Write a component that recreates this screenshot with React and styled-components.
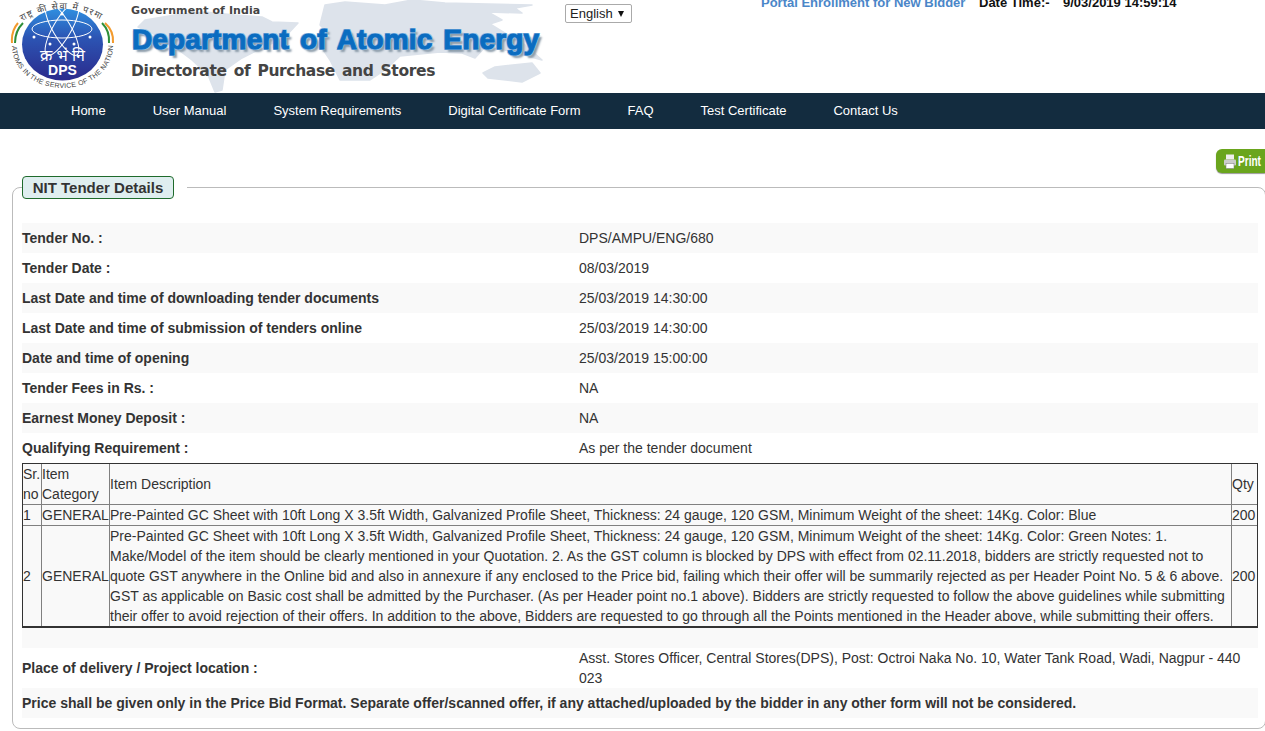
import React from 'react'
import styled, { createGlobalStyle } from 'styled-components'

const GlobalStyle = createGlobalStyle`
  html, body {
    margin: 0;
    padding: 0;
    background: #fff;
    font-family: "Liberation Sans", Arial, sans-serif;
    font-size: 14px;
    color: #333;
    overflow: hidden;
  }
`

const Page = styled.div`
  width: 1265px;
  height: 731px;
  overflow: hidden;
`

const Header = styled.header`
  display: flex;
  height: 93px;
  overflow: hidden;
`

const LogoBox = styled.div`
  width: 131px;
  flex: none;
  padding: 0 0 0 10px;
  box-sizing: border-box;
`

const Banner = styled.div`
  position: relative;
  width: 434px;
  flex: none;
  display: flex;
  flex-direction: column;
  font-family: "DejaVu Sans", sans-serif;
  font-weight: 700;
`

const MapArt = styled.svg`
  position: absolute;
  left: -10px;
  top: 0;
  z-index: 0;
`

const BannerLine = styled.div`
  position: relative;
  z-index: 1;
  white-space: nowrap;
  color: ${(props) => props.color || '#444'};
  font-size: ${(props) => props.size}px;
  line-height: ${(props) => props.height}px;
  letter-spacing: ${(props) => props.spacing || 0}px;
  word-spacing: ${(props) => props.words || 0}px;
`

const DeptLine = styled(BannerLine)`
  padding-left: 1px;
  font-family: "Liberation Sans", Arial, sans-serif;
  -webkit-text-stroke: 1px #0a6cc0;
  text-shadow: 1px 1px 0 #8fbde6, -1px -1px 0 #8fbde6, 1px -1px 0 #8fbde6, -1px 1px 0 #8fbde6, 3px 3px 2px #8a9aa8;
`

const LangBox = styled.div`
  position: relative;
  width: 196px;
  flex: none;
  padding-top: 4px;
`

const LangSelect = styled.select`
  appearance: none;
  display: block;
  box-sizing: border-box;
  width: 67px;
  height: 19px;
  font-family: "Liberation Sans", Arial, sans-serif;
  font-size: 13px;
  color: #222;
  background: #fff;
  border: 1px solid #aaa;
  border-radius: 2px;
  padding: 0 0 0 4px;
`

const LangArrow = styled.span`
  position: absolute;
  left: 53px;
  top: 11px;
  width: 0;
  height: 0;
  border-left: 3.5px solid transparent;
  border-right: 3.5px solid transparent;
  border-top: 6px solid #111;
  pointer-events: none;
`

const TopInfo = styled.div`
  display: flex;
  margin-top: -5px;
  font-size: 13px;
  line-height: 15px;
  font-weight: 700;
  white-space: nowrap;
  color: #111;
`

const EnrollLink = styled.a`
  color: #4a86c8;
  width: 218px;
`

const DateLabel = styled.span`
  width: 84px;
`

const NavBar = styled.nav`
  display: flex;
  gap: 47px;
  height: 36px;
  box-sizing: border-box;
  align-items: center;
  padding: 0 0 1px 71px;
  background: #132c3f;
`

const NavItem = styled.a`
  color: #fff;
  font-size: 13px;
`

const PrintRow = styled.div`
  display: flex;
  justify-content: flex-end;
  padding-top: 20px;
`

const PrintButton = styled.button`
  display: flex;
  align-items: center;
  gap: 1px;
  width: 49px;
  height: 24px;
  padding: 0 0 0 7px;
  border: 0;
  border-radius: 6px 0 0 6px;
  background: #6aa51d;
  box-shadow: 0 1px 1px #999;
  color: #fff;
  font-family: "Liberation Sans", sans-serif;
  font-size: 14px;
  font-weight: 700;
`

const PrintIcon = styled.svg`
  flex: none;
`

const PrintLabel = styled.span`
  display: block;
  flex: none;
  transform: scaleX(0.72);
  transform-origin: left center;
`

const Panel = styled.fieldset`
  box-sizing: border-box;
  margin: 3px 0 0 12px;
  width: 1254px;
  height: 553px;
  padding: 24px 7px 0 9px;
  border: 1px solid #bbb;
  border-radius: 8px;
`

const PanelLegend = styled.legend`
  padding: 0 13px 0 0;
  margin: 0;
`

const PanelTitle = styled.div`
  box-sizing: border-box;
  display: flex;
  align-items: center;
  justify-content: center;
  width: 152px;
  height: 23px;
  font-size: 15px;
  font-weight: 700;
  color: #333;
  background: #dfeeef;
  border: 1px solid #1f6b2c;
  border-radius: 4px;
`

const InfoRow = styled.div`
  display: grid;
  grid-template-columns: 557px 1fr;
  align-items: center;
  min-height: ${(props) => props.height || 30}px;
  background: ${(props) => (props.striped ? '#f9f9f9' : '#fff')};
`

const FieldLabel = styled.div`
  font-weight: 700;
  color: #333;
`

const FieldValue = styled.div`
  line-height: 20px;
  color: #333;
`

const NoteRow = styled.div`
  display: flex;
  align-items: center;
  height: 30px;
  font-weight: 700;
  color: #333;
  background: #f9f9f9;
`

const ItemsTable = styled.table`
  box-sizing: border-box;
  width: 1236px;
  border-collapse: separate;
  border-spacing: 0;
  table-layout: fixed;
  border: 1px solid #333;
  border-bottom-width: 2px;
  background: #f9f9f9;
`

const Cell = styled.td`
  padding: 0;
  line-height: 20px;
  color: #333;
  font-size: 14px;
  overflow: hidden;
  white-space: ${(props) => (props.nowrap ? 'nowrap' : 'normal')};

  & + & {
    border-left: 1px solid #808080;
  }

  tr + tr > & {
    border-top: 1px solid #808080;
  }
`

const Spacer = styled.div`
  height: 20px;
  background: #f9f9f9;
`

const fields = [
  ['Tender No. :', 'DPS/AMPU/ENG/680'],
  ['Tender Date :', '08/03/2019'],
  ['Last Date and time of downloading tender documents', '25/03/2019 14:30:00'],
  ['Last Date and time of submission of tenders online', '25/03/2019 14:30:00'],
  ['Date and time of opening', '25/03/2019 15:00:00'],
  ['Tender Fees in Rs. :', 'NA'],
  ['Earnest Money Deposit :', 'NA'],
  ['Qualifying Requirement :', 'As per the tender document'],
]

const menu = ['Home', 'User Manual', 'System Requirements', 'Digital Certificate Form', 'FAQ', 'Test Certificate', 'Contact Us']

const Logo = () => (
  <svg width="106" height="93" viewBox="0 0 106 93">
    <defs>
      <linearGradient id="disc" x1="0" y1="0" x2="0" y2="1">
        <stop offset="0" stopColor="#2f8fe0" />
        <stop offset="0.4" stopColor="#2c55b4" />
        <stop offset="1" stopColor="#2b2a8c" />
      </linearGradient>
      <path id="topArc" d="M12 21 Q52.5 -3 93 21" />
      <path id="botArc" d="M2 46 A50.5 42 0 0 0 103 46" />
    </defs>
    <ellipse cx="52.5" cy="44.5" rx="40.5" ry="36" fill="url(#disc)" />
    <g fill="none" stroke="#fff" strokeWidth="1">
      <ellipse cx="52" cy="29" rx="30" ry="9" />
      <ellipse cx="52" cy="29" rx="30" ry="9" transform="rotate(60 52 29)" />
      <ellipse cx="52" cy="29" rx="30" ry="9" transform="rotate(120 52 29)" />
    </g>
    <g fill="#fff">
      <circle cx="24" cy="37" r="1.5" />
      <circle cx="80" cy="37" r="1.5" />
      <circle cx="40" cy="44" r="1.5" />
      <circle cx="64" cy="44" r="1.5" />
      <circle cx="52" cy="14" r="1.5" />
    </g>
    <text x="52.5" y="61" textAnchor="middle" fontFamily="'Noto Sans', 'DejaVu Sans', sans-serif" fontSize="16" fill="#fff">क्र भं नि</text>
    <text x="52.5" y="75" textAnchor="middle" fontFamily="'Liberation Sans', sans-serif" fontSize="14" fontWeight="700" fill="#fff">DPS</text>
    <text fontSize="9" fill="#444" fontFamily="'Noto Sans', sans-serif" textLength="90"><textPath href="#topArc">राष्ट्र की सेवा में परमाणु</textPath></text>
    <text fontSize="7" fill="#444" fontFamily="'Liberation Sans', sans-serif" textLength="146"><textPath href="#botArc">ATOMS IN THE SERVICE OF THE NATION</textPath></text>
    <path d="M2 43 Q1 31 8 23" fill="none" stroke="#f39a2d" strokeWidth="2" />
    <path d="M5 43 Q5 31 13 23" fill="none" stroke="#2f8f3a" strokeWidth="2" />
    <path d="M103 43 Q104 31 95 23" fill="none" stroke="#f39a2d" strokeWidth="2" />
    <path d="M99 43 Q100 31 92 23" fill="none" stroke="#2f8f3a" strokeWidth="2" />
  </svg>
)

const App = () => (
  <Page>
    <GlobalStyle />
    <Header>
      <LogoBox><Logo /></LogoBox>
      <Banner>
        <MapArt width="450" height="93" viewBox="121 0 450 93">
          <g fill="#dde3eb" stroke="#dde3eb" strokeWidth="1.5" strokeLinejoin="round">
            <path d="M138 27 L145 20 L175 15 L205 12 L235 15 L262 17 L272 22 L298 23 L285 37 L258 50 L242 58 L225 70 L222 90 L215 92 L208 75 L192 60 L168 42 L152 33 Z" />
            <path d="M325 5 L345 2 L385 5 L412 0 L445 3 L532 5 L515 8 L522 13 L488 12 L502 20 L490 24 L525 45 L542 60 L505 50 L485 47 L475 58 L462 53 L440 52 L400 56 L385 70 L370 80 L340 80 L330 60 L322 48 L330 35 L320 25 Z" />
            <path d="M483 73 L495 67 L532 63 L540 73 L522 82 L488 78 Z" />
          </g>
        </MapArt>
        <BannerLine size={11} height={21} spacing={0.1}>Government of India</BannerLine>
        <DeptLine size={28} height={37} color="#0a6cc0" spacing={0.15} words={3}>Department of Atomic Energy</DeptLine>
        <BannerLine size={15.5} height={26} spacing={-0.36} words={2}>Directorate of Purchase and Stores</BannerLine>
      </Banner>
      <LangBox>
        <LangSelect defaultValue="English"><option>English</option></LangSelect>
        <LangArrow />
      </LangBox>
      <TopInfo>
        <EnrollLink>Portal Enrollment for New Bidder</EnrollLink>
        <DateLabel>Date Time:-</DateLabel>
        <span>9/03/2019 14:59:14</span>
      </TopInfo>
    </Header>
    <NavBar>
      {menu.map((item) => <NavItem key={item}>{item}</NavItem>)}
    </NavBar>
    <PrintRow>
      <PrintButton>
        <PrintIcon width="14" height="17" viewBox="0 0 14 16">
          <rect x="3" y="1" width="8" height="5" fill="#eee" />
          <rect x="1" y="6" width="12" height="6" rx="1" fill="#ccc" />
          <rect x="3" y="10" width="8" height="5" fill="#fff" stroke="#777" strokeWidth="0.5" />
        </PrintIcon>
        <PrintLabel>Print</PrintLabel>
      </PrintButton>
    </PrintRow>
    <Panel>
      <PanelLegend><PanelTitle>NIT Tender Details</PanelTitle></PanelLegend>
      {fields.map(([label, value], i) => (
        <InfoRow key={label} striped={i % 2 === 0}>
          <FieldLabel>{label}</FieldLabel>
          <FieldValue>{value}</FieldValue>
        </InfoRow>
      ))}
      <ItemsTable>
        <colgroup>
          <col style={{ width: 18 }} />
          <col style={{ width: 68 }} />
          <col />
          <col style={{ width: 26 }} />
        </colgroup>
        <tbody>
          <tr>
            <Cell>Sr. no</Cell>
            <Cell>Item Category</Cell>
            <Cell>Item Description</Cell>
            <Cell>Qty</Cell>
          </tr>
          <tr>
            <Cell>1</Cell>
            <Cell nowrap>GENERAL</Cell>
            <Cell>Pre-Painted GC Sheet with 10ft Long X 3.5ft Width, Galvanized Profile Sheet, Thickness: 24 gauge, 120 GSM, Minimum Weight of the sheet: 14Kg. Color: Blue</Cell>
            <Cell>200</Cell>
          </tr>
          <tr>
            <Cell>2</Cell>
            <Cell nowrap>GENERAL</Cell>
            <Cell>Pre-Painted GC Sheet with 10ft Long X 3.5ft Width, Galvanized Profile Sheet, Thickness: 24 gauge, 120 GSM, Minimum Weight of the sheet: 14Kg. Color: Green Notes: 1. Make/Model of the item should be clearly mentioned in your Quotation. 2. As the GST column is blocked by DPS with effect from 02.11.2018, bidders are strictly requested not to quote GST anywhere in the Online bid and also in annexure if any enclosed to the Price bid, failing which their offer will be summarily rejected as per Header Point No. 5 &amp; 6 above. GST as applicable on Basic cost shall be admitted by the Purchaser. (As per Header point no.1 above). Bidders are strictly requested to follow the above guidelines while submitting their offer to avoid rejection of their offers. In addition to the above, Bidders are requested to go through all the Points mentioned in the Header above, while submitting their offers.</Cell>
            <Cell>200</Cell>
          </tr>
        </tbody>
      </ItemsTable>
      <Spacer />
      <InfoRow height={40}>
        <FieldLabel>Place of delivery / Project location :</FieldLabel>
        <FieldValue>Asst. Stores Officer, Central Stores(DPS), Post: Octroi Naka No. 10, Water Tank Road, Wadi, Nagpur - 440 023</FieldValue>
      </InfoRow>
      <NoteRow>Price shall be given only in the Price Bid Format. Separate offer/scanned offer, if any attached/uploaded by the bidder in any other form will not be considered.</NoteRow>
    </Panel>
  </Page>
)

export default App
